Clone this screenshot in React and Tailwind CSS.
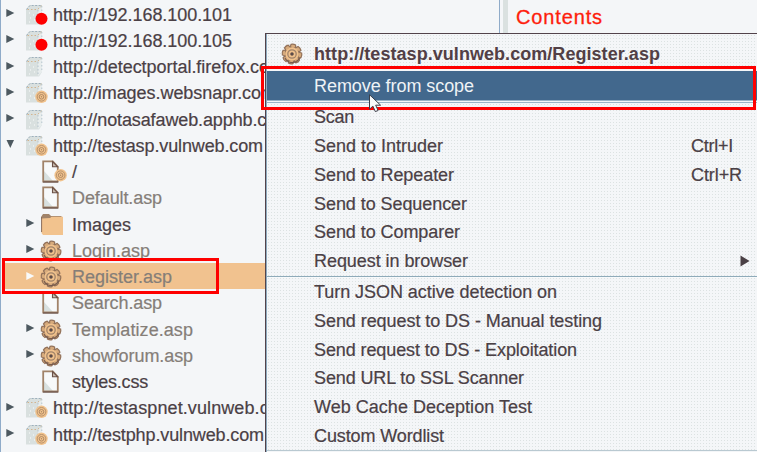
import { useLayoutEffect, useRef, useState } from "react";

// Text tracked so that it spans a given advance width.
function Fit({ w, className = "", children }) {
  const ref = useRef(null);
  const [ls, setLs] = useState(0);
  useLayoutEffect(() => {
    const natural = ref.current.getBoundingClientRect().width;
    setLs((w - natural) / children.length);
  }, []);
  return (
    <span ref={ref} className={`inline-block whitespace-pre ${className}`} style={{ letterSpacing: `${ls}px` }}>
      {children}
    </span>
  );
}

function Twisty({ open, white }) {
  return (
    <svg width="9" height="10" viewBox="0 0 9 10" className="block shrink-0" fill={white ? "#f8fafb" : "#4d5960"}>
      {open ? <path d="M0.5 1h7.5L4.3 9z" /> : <path d="M0.3 1v8L8.3 5z" />}
    </svg>
  );
}

function Swirl({ x, y }) {
  return (
    <g>
      <circle cx={x} cy={y} r="6.2" fill="#f1c28c" />
      <circle cx={x} cy={y} r="4.3" fill="none" stroke="#b8926c" strokeWidth="1" />
      <circle cx={x} cy={y} r="2.3" fill="none" stroke="#b08a66" strokeWidth="1" />
      <circle cx={x} cy={y} r="0.7" fill="#a98664" />
    </g>
  );
}

function Host({ mark }) {
  return (
    <svg width="24" height="24" viewBox="0 0 24 24" className="block shrink-0">
      <path d="M1 6L4.5 2H17v15l-3 4.5H1z" fill="#d9e0df" />
      <path d="M13 7l4-4v14l-4 4z" fill="#e8eded" />
      <path d="M1.5 6.5L5 2.5h11.5" fill="none" stroke="#9eb0bd" strokeWidth="1" strokeDasharray="2 1.5" />
      <path d="M2.5 6.5h10l4.5-4" fill="none" stroke="#d3b48f" strokeWidth="1" strokeDasharray="1.5 2" />
      <path d="M13 7v13M16.8 3v14" fill="none" stroke="#a9bac7" strokeWidth="0.8" strokeDasharray="1.5 2" />
      <path d="M4 10h1M8 12h1M5 15h1M9 17h1M4 19h1" stroke="#fafcfc" strokeWidth="1" />
      {mark === "red" && <circle cx="16.5" cy="15.8" r="6" fill="#fe0000" />}
      {mark === "swirl" && <Swirl x={16.5} y={15.8} />}
    </svg>
  );
}

function Doc({ mark }) {
  return (
    <svg width="28" height="24" viewBox="0 0 28 24" className="block shrink-0">
      <path d="M3 1.3h10l4.8 5.5v15H3z" fill="#f7f9fa" />
      <path d="M4 11l9 10H4z" fill="#d8e0df" />
      <path d="M3.2 1.3h9.6l5 5.5v14.7H3.2z" fill="none" stroke="#a18369" strokeWidth="1.8" />
      <path d="M12.5 1.5v5.3h5.2z" fill="#c9bdb0" stroke="#6b5148" strokeWidth="1.1" />
      <path d="M3 22h15" stroke="#5b4442" strokeWidth="1" />
      {mark && <Swirl x={20.6} y={15.2} />}
    </svg>
  );
}

function Folder() {
  return (
    <svg width="24" height="24" viewBox="0 0 24 24" className="block shrink-0">
      <path d="M1 4L3 1h6l2 2h10.5v3H1z" fill="#a18369" />
      <path d="M1.5 5.5L10 5l1.5-1.2H23V22H3l-1.5-2z" fill="#f2c38e" />
      <path d="M1.6 4v15" stroke="#8b6e5c" strokeWidth="1" />
    </svg>
  );
}

const TEETH = [0, 45, 90, 135, 180, 225, 270, 315];

function Gear() {
  return (
    <svg width="22" height="22" viewBox="0 0 22 22" className="block shrink-0">
      {TEETH.map((a) => (
        <path key={a} d="M7.6 5.2Q8.6 3.6 8.7 1.6Q11 0.6 13.3 1.6Q13.4 3.6 14.4 5.2z" fill="#d6aa7c" stroke="#927159" strokeWidth="1.2" transform={`rotate(${a + 8} 11 11)`} />
      ))}
      <circle cx="11" cy="11" r="6.7" fill="#f0c18c" />
      <path d="M4 15a8 8 0 0 0 13 2.2l2.3-2.2" fill="none" stroke="#765a4d" strokeWidth="1.1" />
      <circle cx="11" cy="11" r="4.2" fill="none" stroke="#a18369" strokeWidth="1.3" />
      <circle cx="11" cy="11" r="1.8" fill="#8a6c57" />
      <path d="M11 9.5v3M9.5 11h3" stroke="#4d4044" strokeWidth="1" />
    </svg>
  );
}

const DARK = "text-[#4a4045]";
const GRAY = "text-[#857e78]";

const tree = [
  { icon: <Host mark="red" />, label: "http://192.168.100.101", w: 179 },
  { icon: <Host mark="red" />, label: "http://192.168.100.105", w: 179 },
  { icon: <Host />, label: "http://detectportal.firefox.com", w: 231 },
  { icon: <Host mark="swirl" />, label: "http://images.websnapr.com", w: 223 },
  { icon: <Host />, label: "http://notasafaweb.apphb.com", w: 238 },
  { icon: <Host mark="swirl" />, label: "http://testasp.vulnweb.com", w: 210, open: true },
  { icon: <Doc mark />, label: "/", w: 5, leaf: true, child: true },
  { icon: <Doc />, label: "Default.asp", w: 90, leaf: true, child: true, gray: true },
  { icon: <Folder />, label: "Images", w: 59, child: true },
  { icon: <Gear />, label: "Login.asp", w: 78, child: true, gray: true },
  { icon: <Gear />, label: "Register.asp", w: 100, child: true, gray: true, selected: true },
  { icon: <Doc />, label: "Search.asp", w: 90, leaf: true, child: true, gray: true },
  { icon: <Gear />, label: "Templatize.asp", w: 121, child: true, gray: true },
  { icon: <Gear />, label: "showforum.asp", w: 121, child: true, gray: true },
  { icon: <Doc />, label: "styles.css", w: 76, leaf: true, child: true },
  { icon: <Host mark="swirl" />, label: "http://testaspnet.vulnweb.com", w: 241 },
  { icon: <Host mark="swirl" />, label: "http://testphp.vulnweb.com", w: 211 },
];

function TreeRow({ row }) {
  return (
    <div className={`flex h-[26.25px] items-center ${row.child ? "pl-[24px]" : "pl-[4px]"} ${row.selected ? "bg-[#f1c28f]" : ""}`}>
      <div className={`${row.child ? "w-[14px]" : "w-[19px]"} shrink-0 pb-[1px]`}>
        {!row.leaf && <Twisty open={row.open} white={row.selected} />}
      </div>
      <div className={`${row.child ? "w-[32px]" : "w-[28px]"} shrink-0 pt-[2px]`}>
        {row.icon}
      </div>
      <Fit w={row.w} className={`pt-[2px] text-[18px] leading-[26px] [-webkit-text-stroke:0.2px] ${row.gray ? GRAY : DARK}`}>
        {row.label}
      </Fit>
    </div>
  );
}

const actions = [
  { label: "Scan", w: 40 },
  { label: "Send to Intruder", w: 129, key: "Ctrl+I", kw: 42 },
  { label: "Send to Repeater", w: 140, key: "Ctrl+R", kw: 51 },
  { label: "Send to Sequencer", w: 153 },
  { label: "Send to Comparer", w: 146 },
  { label: "Request in browser", w: 154, sub: true },
];

const extensions = [
  { label: "Turn JSON active detection on", w: 243 },
  { label: "Send request to DS - Manual testing", w: 288 },
  { label: "Send request to DS - Exploitation", w: 263 },
  { label: "Send URL to SSL Scanner", w: 210 },
  { label: "Web Cache Deception Test", w: 218 },
  { label: "Custom Wordlist", w: 130 },
];

function MenuRow({ item }) {
  return (
    <div className="flex h-[28.75px] items-center pl-[46px] [-webkit-text-stroke:0.2px]">
      <Fit w={item.w} className="text-[18px] leading-[28px]">{item.label}</Fit>
      {item.key && (
        <div className="ml-auto w-[66px]">
          <Fit w={item.kw} className="text-[18px] leading-[28px]">{item.key}</Fit>
        </div>
      )}
      {item.sub && (
        <svg width="10" height="12" viewBox="0 0 10 12" className="mr-[7px] ml-auto block">
          <path d="M0.5 0.5v11L9.5 6z" fill="#4a4045" />
        </svg>
      )}
    </div>
  );
}

function ContextMenu() {
  return (
    <div className="absolute top-[33px] left-[265px] flex h-[419px] w-[492px] flex-col border-t border-l border-[#52434b] bg-[#f4f6f8] text-[#4a4045]">
      <div className="flex grow flex-col border-l border-[#8eabbf] bg-[radial-gradient(#dce2e2_0.6px,transparent_0.9px)] bg-[length:3px_3px]">
        <div className="flex h-[37px] shrink-0 items-center pt-[2px] pl-[14px]">
          <Gear />
          <Fit w={346} className="ml-[11px] text-[18px] leading-[28px] font-bold text-[#523f45]">
            http://testasp.vulnweb.com/Register.asp
          </Fit>
        </div>
        <div className="flex h-[29px] shrink-0 items-center bg-[#42688d] pl-[47px] text-[#eef3f6]">
          <Fit w={160} className="text-[18px] leading-[28px]">Remove from scope</Fit>
        </div>
        <div className="h-[3px] shrink-0 border-y border-[#9ab4c6] bg-[#f4f6f8]" />
        <div className="flex h-[173px] shrink-0 flex-col pl-px">
          {actions.map((a) => <MenuRow key={a.label} item={a} />)}
        </div>
        <div className="h-[2px] shrink-0 border-t border-[#8fabba] bg-[#f8fafb]" />
        <div className="flex h-[172px] shrink-0 flex-col pl-px">
          {extensions.map((a) => <MenuRow key={a.label} item={a} />)}
        </div>
        <div className="h-px shrink-0 bg-[#b9c9d1]" />
      </div>
    </div>
  );
}

export default function App() {
  return (
    <div className="relative flex h-[452px] w-[757px] overflow-hidden bg-[#f4f6f8] font-['Liberation_Sans',Arial,sans-serif]">
      <div className="flex w-[500px] shrink-0 flex-col border-r border-l border-[#8fabc9] pt-[0.5px] pl-px">
        {tree.map((row) => <TreeRow key={row.label} row={row} />)}
      </div>
      <div className="w-[3px] shrink-0" />
      <div className="w-[5px] shrink-0 bg-[#dae1e0]" />
      <div className="pt-[4px] pl-[8px]">
        <Fit w={87} className="text-[20px] leading-[27px] text-[#fe1d0c] [-webkit-text-stroke:0.3px]">Contents</Fit>
      </div>

      <ContextMenu />

      {/* Annotation frames and mouse pointer */}
      <div className="absolute top-[66px] left-[261px] h-[44px] w-[495px] border-[3px] border-[#fe0000]" />
      <div className="absolute top-[258px] left-[2px] h-[36px] w-[217px] border-[3px] border-[#fe0000]" />
      <svg className="absolute top-[94px] left-[369px]" width="13" height="19" viewBox="0 0 13 19">
        <path d="M0.5 0.7v14.5l3.4-3.1 2.4 5.5 2.8-1.1-2.4-5.3h4.9z" fill="#f8fafb" stroke="#3c3f4a" strokeWidth="1" />
      </svg>
    </div>
  );
}
